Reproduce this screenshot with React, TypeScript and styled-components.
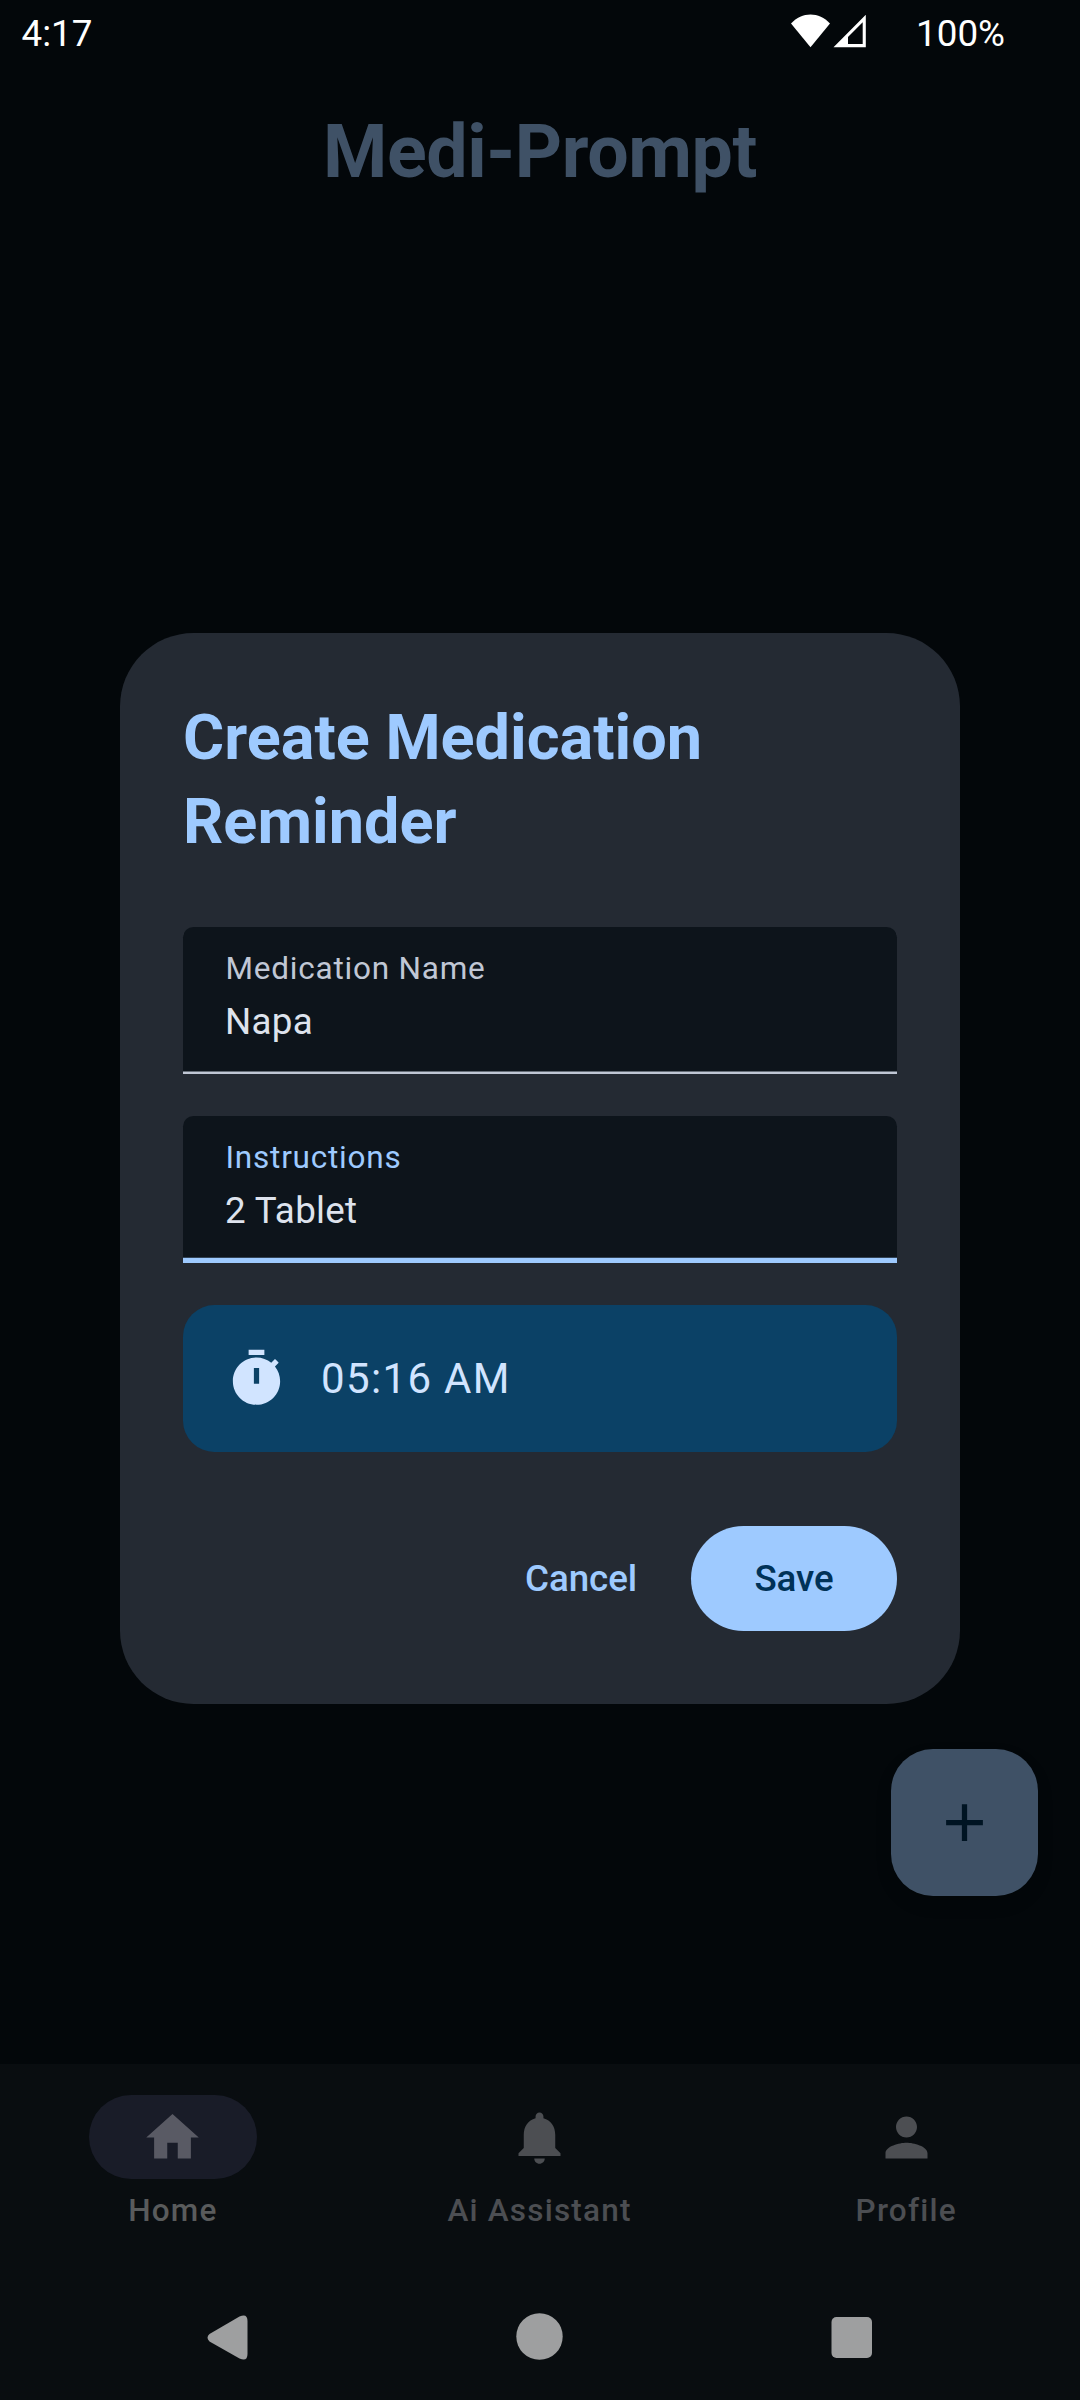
import React from "react";
import styled, { createGlobalStyle } from "styled-components";

const color = {
  background: "#03070a",
  navBar: "#090d10",
  dialog: "#242a33",
  field: "#0d141b",
  primary: "#9ecaff",
  onPrimary: "#003258",
  primaryContainer: "#0b4166",
  onPrimaryContainer: "#d1e4ff",
  text: "#dee3ed",
  muted: "#c0c7d5",
  primaryDim: "#3f5166",
  onPrimaryDim: "#001423",
};

const GlobalStyle = createGlobalStyle`
  *, *::before, *::after { box-sizing: border-box; }
  body { margin: 0; background: ${color.background}; }
  button { font: inherit; border: 0; padding: 0; margin: 0; background: none; }
`;

const Screen = styled.div`
  position: relative;
  display: flex;
  flex-direction: column;
  width: 1080px;
  height: 2400px;
  overflow: hidden;
  background: ${color.background};
  font-family: Roboto, "Noto Sans", sans-serif;
`;

const StatusBar = styled.header`
  display: flex;
  align-items: center;
  height: 63px;
  padding: 4px 75px 0 21.5px;
  color: #fff;
  font-size: 36.75px;
  line-height: 43px;
`;

const StatusIcons = styled.svg`
  width: 76px;
  height: 34px;
  margin: 0 50px 6px auto;
`;

const AppTitle = styled.h1`
  margin: 42px 0 0;
  text-align: center;
  color: ${color.primaryDim};
  font-size: 73.5px;
  font-weight: 700;
  line-height: 94px;
  letter-spacing: -0.4px;
`;

const Content = styled.main`
  flex: 1;
  display: flex;
  flex-direction: column;
  align-items: flex-end;
  justify-content: flex-end;
  padding: 0 42px 168px;
`;

const Fab = styled.button`
  display: grid;
  place-items: center;
  width: 147px;
  height: 147px;
  border-radius: 42px;
  background: ${color.primaryDim};
  color: ${color.onPrimaryDim};
  box-shadow: 0 8px 16px rgba(0, 0, 0, 0.15);
`;

const BottomNav = styled.nav`
  display: flex;
  gap: 21px;
  height: 210px;
  padding: 31px 1px 0 0;
  background: ${color.navBar};
`;

const NavItem = styled.div<{ $active?: boolean }>`
  flex: 1;
  display: flex;
  flex-direction: column;
  align-items: center;
  gap: 11px;
  color: ${(p) => (p.$active ? "#595b5c" : "#4c4e52")};
`;

const NavPill = styled.span<{ $active?: boolean }>`
  display: grid;
  place-items: center;
  width: 168px;
  height: 84px;
  border-radius: 42px;
  background: ${(p) => (p.$active ? "#191c28" : "transparent")};
  color: ${(p) => (p.$active ? "#595a64" : "inherit")};
`;

const NavLabel = styled.span`
  font-size: 31.5px;
  font-weight: 500;
  line-height: 42px;
  letter-spacing: 1.2px;
`;

const SystemNav = styled.footer`
  height: 126px;
  background: ${color.navBar};
`;

const SystemIcons = styled.svg`
  display: block;
  width: 1080px;
  height: 126px;
  fill: #9e9fa0;
`;

const Icon = styled.svg`
  display: block;
  width: 63px;
  height: 63px;
  fill: currentColor;
`;

const Overlay = styled.div`
  position: absolute;
  inset: 0;
  display: flex;
  align-items: center;
  justify-content: center;
  padding: 63px 120px 126px;
`;

const Dialog = styled.section`
  display: flex;
  flex-direction: column;
  gap: 42px;
  width: 840px;
  height: 1071px;
  padding: 63px;
  border-radius: 73.5px;
  background: ${color.dialog};
`;

const DialogTitle = styled.h2`
  margin: 0 0 21px;
  color: ${color.primary};
  font-size: 63px;
  font-weight: 700;
  line-height: 84px;
`;

const Field = styled.label<{ $focused?: boolean }>`
  display: flex;
  flex-direction: column;
  height: 147px;
  padding: 21px 42px 0;
  border-radius: 10.5px 10.5px 0 0;
  background: ${color.field};
  box-shadow: inset 0 ${(p) => (p.$focused ? "-5.25px" : "-2.6px")} 0
    ${(p) => (p.$focused ? color.primary : color.muted)};
`;

const FieldLabel = styled.span<{ $focused?: boolean }>`
  padding-left: 0.5px;
  color: ${(p) => (p.$focused ? color.primary : color.muted)};
  font-size: 31.5px;
  line-height: 42px;
  letter-spacing: 0.78px;
`;

const FieldValue = styled.span`
  margin-top: 6px;
  color: ${color.text};
  font-size: 36.75px;
  line-height: 52px;
  letter-spacing: 0.3px;
`;

const TimeButton = styled.button`
  display: flex;
  align-items: center;
  gap: 33px;
  height: 147px;
  padding: 0 42px;
  border-radius: 31.5px;
  background: ${color.primaryContainer};
  color: ${color.onPrimaryContainer};
  font-size: 42px;
  line-height: 63px;
  letter-spacing: 1.35px;
`;

const Actions = styled.div`
  display: flex;
  align-items: center;
  justify-content: flex-end;
  gap: 22.5px;
  margin-top: 32px;
`;

const ActionButton = styled.button<{ $filled?: boolean }>`
  height: 105px;
  ${(p) => (p.$filled ? "width: 206px;" : "padding: 0 31.5px;")}
  border-radius: 52.5px;
  background: ${(p) => (p.$filled ? color.primary : "transparent")};
  color: ${(p) => (p.$filled ? color.onPrimary : color.primary)};
  font-size: 36.75px;
  font-weight: 500;
  line-height: 52px;
  letter-spacing: -0.1px;
`;

const paths = {
  home: "M10 20v-6h4v6h5v-8h3L12 3 2 12h3v8z",
  bell: "M12 22c1.1 0 2-.9 2-2h-4c0 1.1.89 2 2 2zm6-6v-5c0-3.07-1.64-5.64-4.5-6.32V4c0-.83-.67-1.5-1.5-1.5s-1.5.67-1.5 1.5v.68C7.63 5.36 6 7.92 6 11v5l-2 2v1h16v-1l-2-2z",
  person:
    "M12 12c2.21 0 4-1.79 4-4s-1.79-4-4-4-4 1.79-4 4 1.79 4 4 4zm0 2c-2.67 0-8 1.34-8 4v2h16v-2c0-2.66-5.33-4-8-4z",
  add: "M19 13h-6v6h-2v-6H5v-2h6V5h2v6h6v2z",
  timer:
    "M9 1h6v2H9zM19.03 7.39l1.42-1.42c-.43-.51-.9-.99-1.41-1.41l-1.42 1.42C16.07 4.74 14.12 4 12 4c-4.97 0-9 4.03-9 9s4.02 9 9 9 9-4.03 9-9c0-2.12-.74-4.07-1.97-5.61zM13 14h-2V8h2v6z",
};

const Glyph = ({ name }: { name: keyof typeof paths }) => (
  <Icon viewBox="0 0 24 24" aria-hidden="true">
    <path d={paths[name]} />
  </Icon>
);

const tabs: { label: string; icon: keyof typeof paths; active?: boolean }[] = [
  { label: "Home", icon: "home", active: true },
  { label: "Ai Assistant", icon: "bell" },
  { label: "Profile", icon: "person" },
];

const fields = [
  { label: "Medication Name", value: "Napa", focused: false },
  { label: "Instructions", value: "2 Tablet", focused: true },
];

export default function App() {
  return (
    <>
      <GlobalStyle />
      <Screen>
        <StatusBar>
          <span>4:17</span>
          <StatusIcons viewBox="0 0 76 34" fill="#fff">
            <path d="M1 9.5C12 -2.5 29 -2.5 40 9.5L20.5 33.2z" />
            <path
              fillRule="evenodd"
              d="M43.5 33.2L75.8 .8V33.2zM58 30.1H72.7V8.300L58 23z"
            />
          </StatusIcons>
          <span>100%</span>
        </StatusBar>
        <AppTitle>Medi-Prompt</AppTitle>
        <Content>
          <Fab aria-label="Add">
            <Glyph name="add" />
          </Fab>
        </Content>
        <BottomNav>
          {tabs.map((t) => (
            <NavItem key={t.label} $active={t.active}>
              <NavPill $active={t.active}>
                <Glyph name={t.icon} />
              </NavPill>
              <NavLabel>{t.label}</NavLabel>
            </NavItem>
          ))}
        </BottomNav>
        <SystemNav>
          <SystemIcons viewBox="0 0 1080 126">
            <path d="M209.5 60L239.5 42.500Q247.500 39 247.500 47V80Q247.500 88 239.500 84.500L209.500 67.500Q205.500 63.700 209.500 60z" />
            <circle cx="539.500" cy="62.500" r="23.200" />
            <rect x="831.500" y="43" width="40.500" height="41" rx="5" />
          </SystemIcons>
        </SystemNav>
        <Overlay>
          <Dialog role="dialog">
            <DialogTitle>Create Medication Reminder</DialogTitle>
            {fields.map((f) => (
              <Field key={f.label} $focused={f.focused}>
                <FieldLabel $focused={f.focused}>{f.label}</FieldLabel>
                <FieldValue>{f.value}</FieldValue>
              </Field>
            ))}
            <TimeButton>
              <Glyph name="timer" />
              <span>05:16 AM</span>
            </TimeButton>
            <Actions>
              <ActionButton>Cancel</ActionButton>
              <ActionButton $filled>Save</ActionButton>
            </Actions>
          </Dialog>
        </Overlay>
      </Screen>
    </>
  );
}
